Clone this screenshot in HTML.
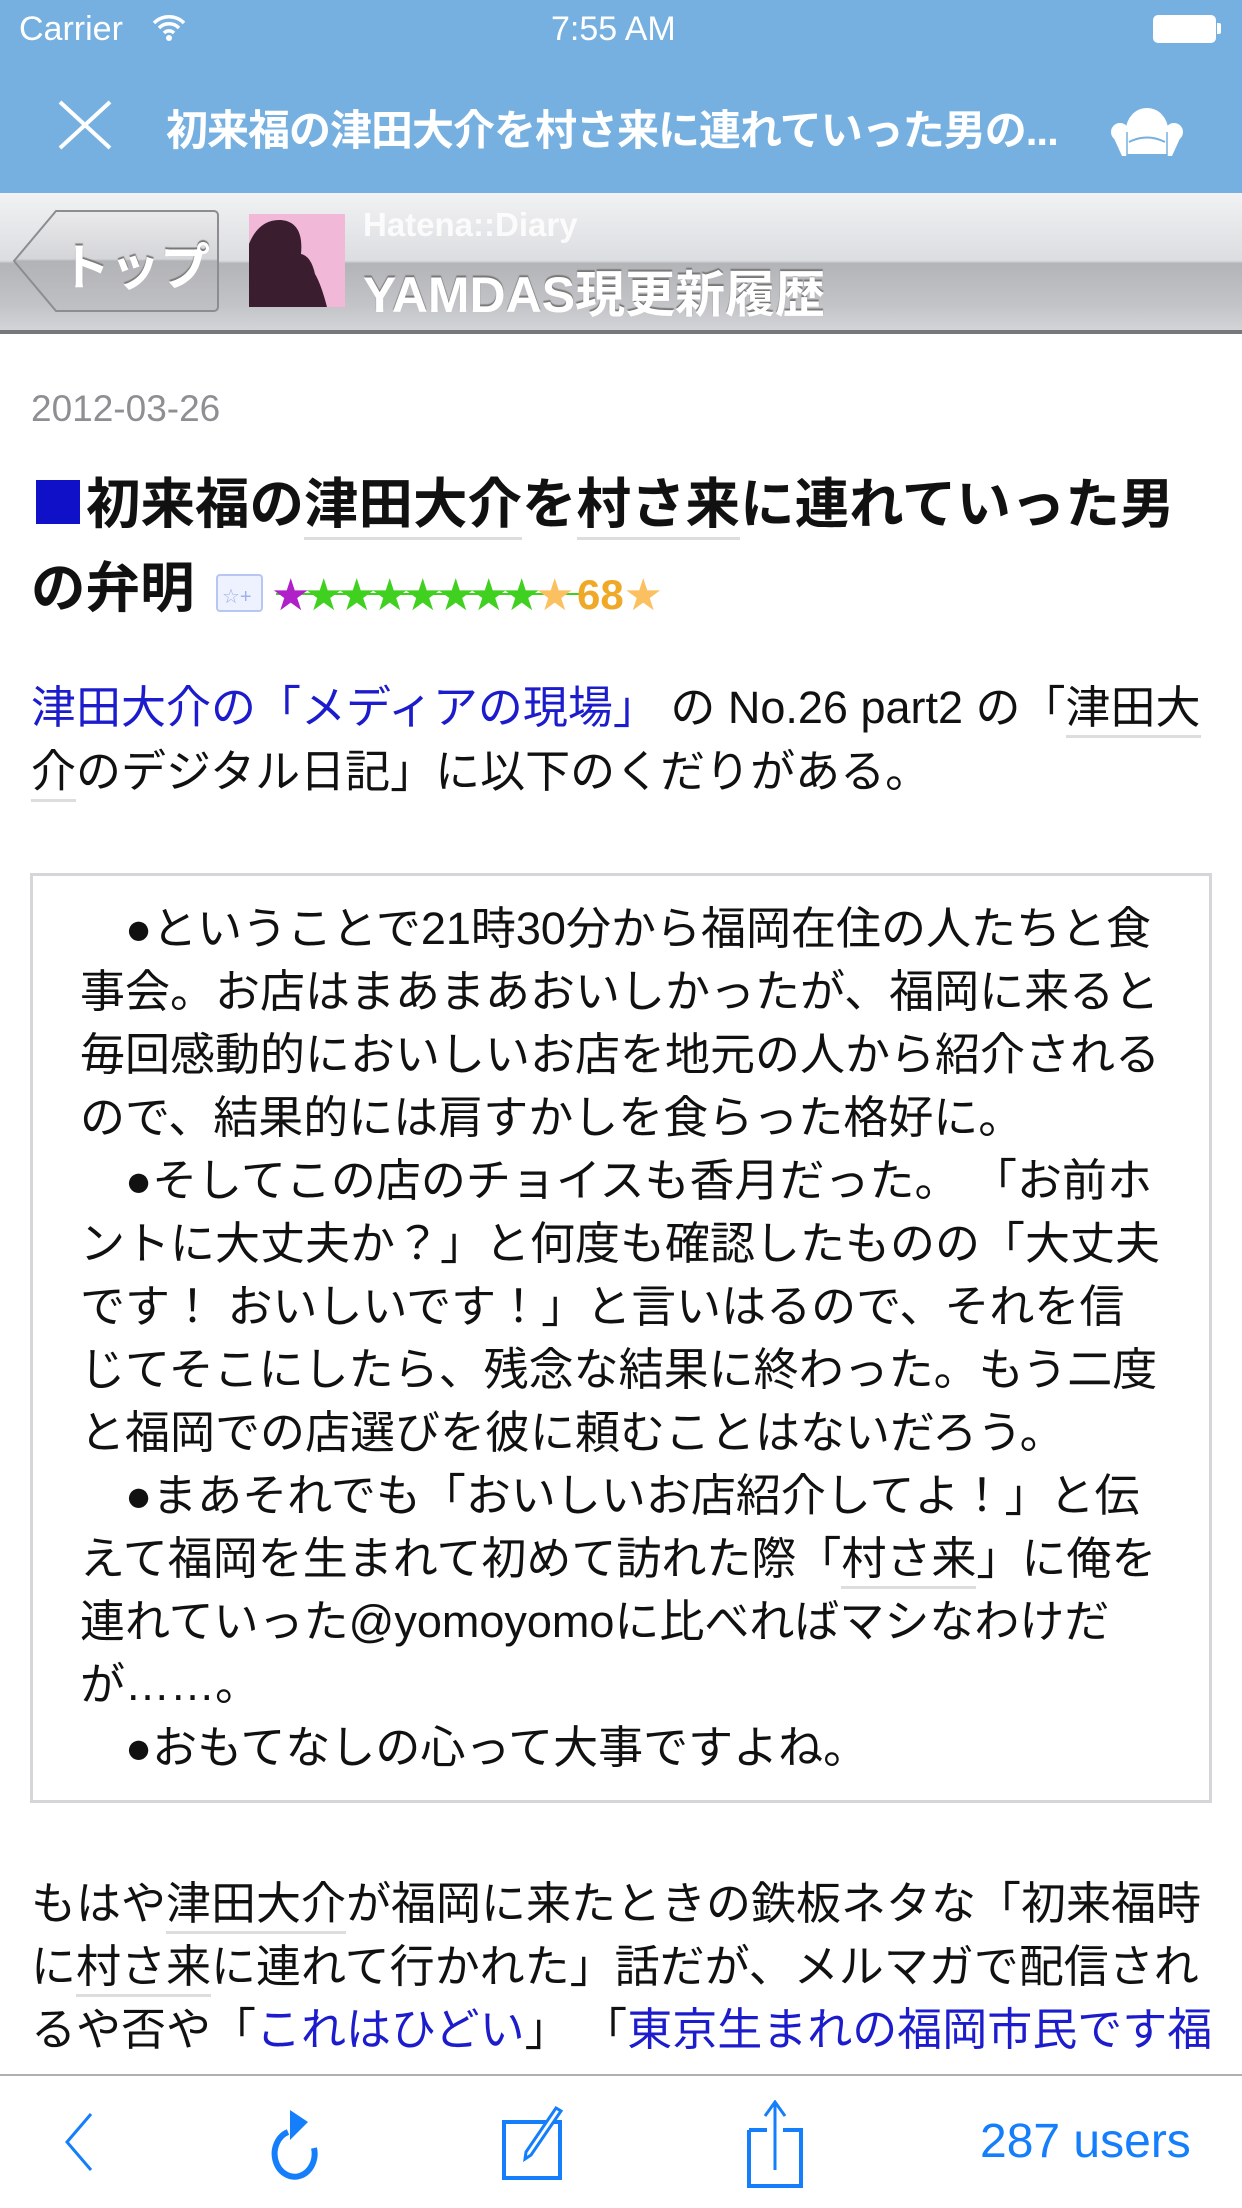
<!DOCTYPE html>
<html><head><meta charset="utf-8"><style>
*{margin:0;padding:0;box-sizing:border-box}
body{width:1242px;height:2208px;overflow:hidden;background:#fff;position:relative;font-family:"Liberation Sans","Noto Sans CJK JP",sans-serif;color:#111}
.abs{position:absolute}
.nw{white-space:nowrap}
#top{left:0;top:0;width:1242px;height:193px;background:#75b0e0}
#hdr{left:0;top:193px;width:1242px;height:141px;background:linear-gradient(#f1f2f4 0%,#dcdde0 48%,#b3b4b8 50%,#c3c4c8 80%,#d3d4d7 97%,#77787c 97%,#77787c 100%)}
.u{border-bottom:3px solid #ddd;padding-bottom:2px}
.lk{color:#1c1ccc}
.line{position:absolute;left:31px;font-size:45px;line-height:63px;white-space:nowrap}
.bq{position:absolute;left:80px;font-size:45px;line-height:63px;white-space:nowrap}
#tb{left:0;top:2074px;width:1242px;height:134px;background:#fff;border-top:2px solid #b0b0b0}
</style></head><body>
<div id="top" class="abs"></div>
<div class="abs nw" style="left:19px;top:10px;font-size:34px;color:#fff">Carrier</div>
<svg class="abs" style="left:152px;top:14px" width="34" height="28" viewBox="0 0 34 28"><path d="M2 9a21 21 0 0 1 30 0M7 14a14 14 0 0 1 20 0M12 19a7 7 0 0 1 10 0" stroke="#fff" stroke-width="3.5" fill="none"/><circle cx="17" cy="24" r="3" fill="#fff"/></svg>
<div class="abs nw" style="left:551px;top:10px;font-size:34px;color:#fff">7:55 AM</div>
<div class="abs" style="left:1153px;top:15px;width:63px;height:28px;border:2px solid #fff;border-radius:5px;background:#fff"></div>
<div class="abs" style="left:1217px;top:23px;width:4px;height:11px;background:#fff;border-radius:0 2px 2px 0"></div>
<svg class="abs" style="left:58px;top:100px" width="54" height="50"><path d="M2 2L52 48M52 2L2 48" stroke="#fff" stroke-width="4"/></svg>
<div class="abs nw" style="left:166px;top:97px;font-size:42px;font-weight:bold;color:#fff;letter-spacing:-1px">初来福の津田大介を村さ来に連れていった男の...</div>
<svg class="abs" style="left:1110px;top:96px" width="74" height="62" viewBox="0 0 74 62"><path d="M16 34a21 22 0 0 1 42 0v16H16z" fill="#fff"/><ellipse cx="10" cy="36" rx="9" ry="9" fill="#fff"/><ellipse cx="64" cy="36" rx="9" ry="9" fill="#fff"/><path d="M2 38l10 22h5l2-22zM72 38l-10 22h-5l-2-22z" fill="#fff"/><path d="M17 48h40v10H17z" fill="#fff"/><path d="M19 46q18-9 36 0" stroke="#75b0e0" stroke-width="2" fill="none"/><path d="M17 36v24M57 36v24" stroke="#75b0e0" stroke-width="1.5"/></svg>
<div id="hdr" class="abs"></div>
<svg class="abs" style="left:12px;top:209px" width="208" height="104" viewBox="0 0 208 104"><defs><linearGradient id="g" x1="0" y1="0" x2="0" y2="1"><stop offset="0" stop-color="#eaeaec"/><stop offset="0.48" stop-color="#d4d5d8"/><stop offset="0.5" stop-color="#b2b3b7"/><stop offset="1" stop-color="#c0c1c4"/></linearGradient></defs><path d="M2 52L44 2H202a4 4 0 0 1 4 4V98a4 4 0 0 1-4 4H44z" fill="url(#g)" stroke="#8c8d90" stroke-width="2"/></svg>
<div class="abs nw" style="left:60px;top:228px;font-size:50px;font-weight:bold;color:#fff;text-shadow:0 -2px 1px #777">トップ</div>
<div class="abs" style="left:249px;top:214px;width:96px;height:93px;background:#f2b8d8;overflow:hidden"><svg width="96" height="93"><path d="M0 93V30Q10 5 32 6Q55 8 52 40Q62 42 66 60Q72 70 78 93z" fill="#3a1e30"/></svg></div>
<div class="abs nw" style="left:363px;top:206px;font-size:33px;font-weight:bold;color:#fff;opacity:.85">Hatena::Diary</div>
<div class="abs nw" style="left:363px;top:255px;font-size:50px;font-weight:bold;color:#fff;text-shadow:0 -2px 1px #777">YAMDAS現更新履歴</div>

<div class="abs nw" style="left:31px;top:388px;font-size:37px;color:#8e8e93">2012-03-26</div>
<div class="abs nw" style="left:36px;top:480px;width:44px;height:44px;background:#1010c8"></div>
<div class="abs nw" style="left:86px;top:470px;font-size:54.5px;font-weight:bold;line-height:70px">初来福の<span class="u">津田大介</span>を<span class="u">村さ来</span>に連れていった男</div>
<div class="abs nw" style="left:31px;top:554px;font-size:54.5px;font-weight:bold;line-height:70px">の弁明</div>
<svg class="abs" style="left:216px;top:570px" width="450" height="46" viewBox="0 0 450 46">
<rect x="1" y="5" width="45" height="36" rx="3" fill="#eef2ff" stroke="#b8c6f4" stroke-width="2"/><text x="6" y="33" font-size="20" fill="#9fb0ea" font-family="Liberation Sans">☆+</text>
<g font-family="DejaVu Sans" font-size="44">
<line x1="60" y1="24" x2="370" y2="24" stroke="#40d020" stroke-width="2"/>
<text x="55" y="40" fill="#b020c8">★</text>
<text x="88" y="40" fill="#40d020">★</text><text x="121" y="40" fill="#40d020">★</text><text x="154" y="40" fill="#40d020">★</text><text x="187" y="40" fill="#40d020">★</text><text x="220" y="40" fill="#40d020">★</text><text x="253" y="40" fill="#40d020">★</text><text x="286" y="40" fill="#40d020">★</text>
<text x="319" y="40" fill="#fbc060">★</text>
<text x="447" y="40" fill="#fbc060" text-anchor="end">★</text></g>
<text x="361" y="39" font-size="42" font-weight="bold" fill="#f0a828" font-family="Liberation Sans">68</text>
</svg>

<div class="line" style="top:676px"><span class="lk">津田大介の「メディアの現場」</span> の No.26 part2 の「<span class="u">津田大</span></div>
<div class="line" style="top:740px"><span class="u">介</span>のデジタル日記」に以下のくだりがある。</div>

<div class="abs" style="left:30px;top:873px;width:1182px;height:930px;border:3px solid #d4d6da"></div>
<div class="bq" style="top:897px">　●ということで21時30分から福岡在住の人たちと食</div>
<div class="bq" style="top:960px">事会。お店はまあまあおいしかったが、福岡に来ると</div>
<div class="bq" style="top:1023px">毎回感動的においしいお店を地元の人から紹介される</div>
<div class="bq" style="top:1086px">ので、結果的には肩すかしを食らった格好に。</div>
<div class="bq" style="top:1149px">　●そしてこの店のチョイスも香月だった。 「お前ホ</div>
<div class="bq" style="top:1212px">ントに大丈夫か？」と何度も確認したものの「大丈夫</div>
<div class="bq" style="top:1275px">です！ おいしいです！」と言いはるので、それを信</div>
<div class="bq" style="top:1338px">じてそこにしたら、残念な結果に終わった。もう二度</div>
<div class="bq" style="top:1401px">と福岡での店選びを彼に頼むことはないだろう。</div>
<div class="bq" style="top:1464px">　●まあそれでも「おいしいお店紹介してよ！」と伝</div>
<div class="bq" style="top:1527px">えて福岡を生まれて初めて訪れた際「<span class="u">村さ来</span>」に俺を</div>
<div class="bq" style="top:1590px">連れていった@yomoyomoに比べればマシなわけだ</div>
<div class="bq" style="top:1653px">が……。</div>
<div class="bq" style="top:1716px">　●おもてなしの心って大事ですよね。</div>

<div class="line" style="top:1872px">もはや<span class="u">津田大介</span>が福岡に来たときの鉄板ネタな「初来福時</div>
<div class="line" style="top:1935px">に<span class="u">村さ来</span>に連れて行かれた」話だが、メルマガで配信され</div>
<div class="line" style="top:1998px">るや否や「<span class="lk">これはひどい</span>」 「<span class="lk">東京生まれの福岡市民です福</span></div>

<div id="tb" class="abs"></div>
<svg class="abs" style="left:55px;top:2112px" width="40" height="60"><path d="M36 2L12 30L36 58" stroke="#147efb" stroke-width="3" fill="none"/></svg>
<svg class="abs" style="left:262px;top:2106px" width="64" height="76" viewBox="0 0 64 76"><path d="M26 26A20 23 0 1 0 52 42" stroke="#147efb" stroke-width="6" fill="none"/><path d="M28 4V34L46 16z" fill="#147efb"/></svg>
<svg class="abs" style="left:500px;top:2104px" width="74" height="78"><rect x="4" y="18" width="56" height="56" fill="none" stroke="#147efb" stroke-width="4"/><path d="M26 48L56 4l5 3-30 44-6 4z" fill="#fff" stroke="#147efb" stroke-width="3"/></svg>
<svg class="abs" style="left:743px;top:2100px" width="64" height="90"><path d="M6 30H24M40 30H58V86H6V30" stroke="#147efb" stroke-width="4" fill="none"/><path d="M32 4V70M22 16L32 2 42 16" stroke="#147efb" stroke-width="3" fill="none"/></svg>
<div class="abs nw" style="left:980px;top:2114px;font-size:48px;color:#147efb">287 users</div>
</body></html>
